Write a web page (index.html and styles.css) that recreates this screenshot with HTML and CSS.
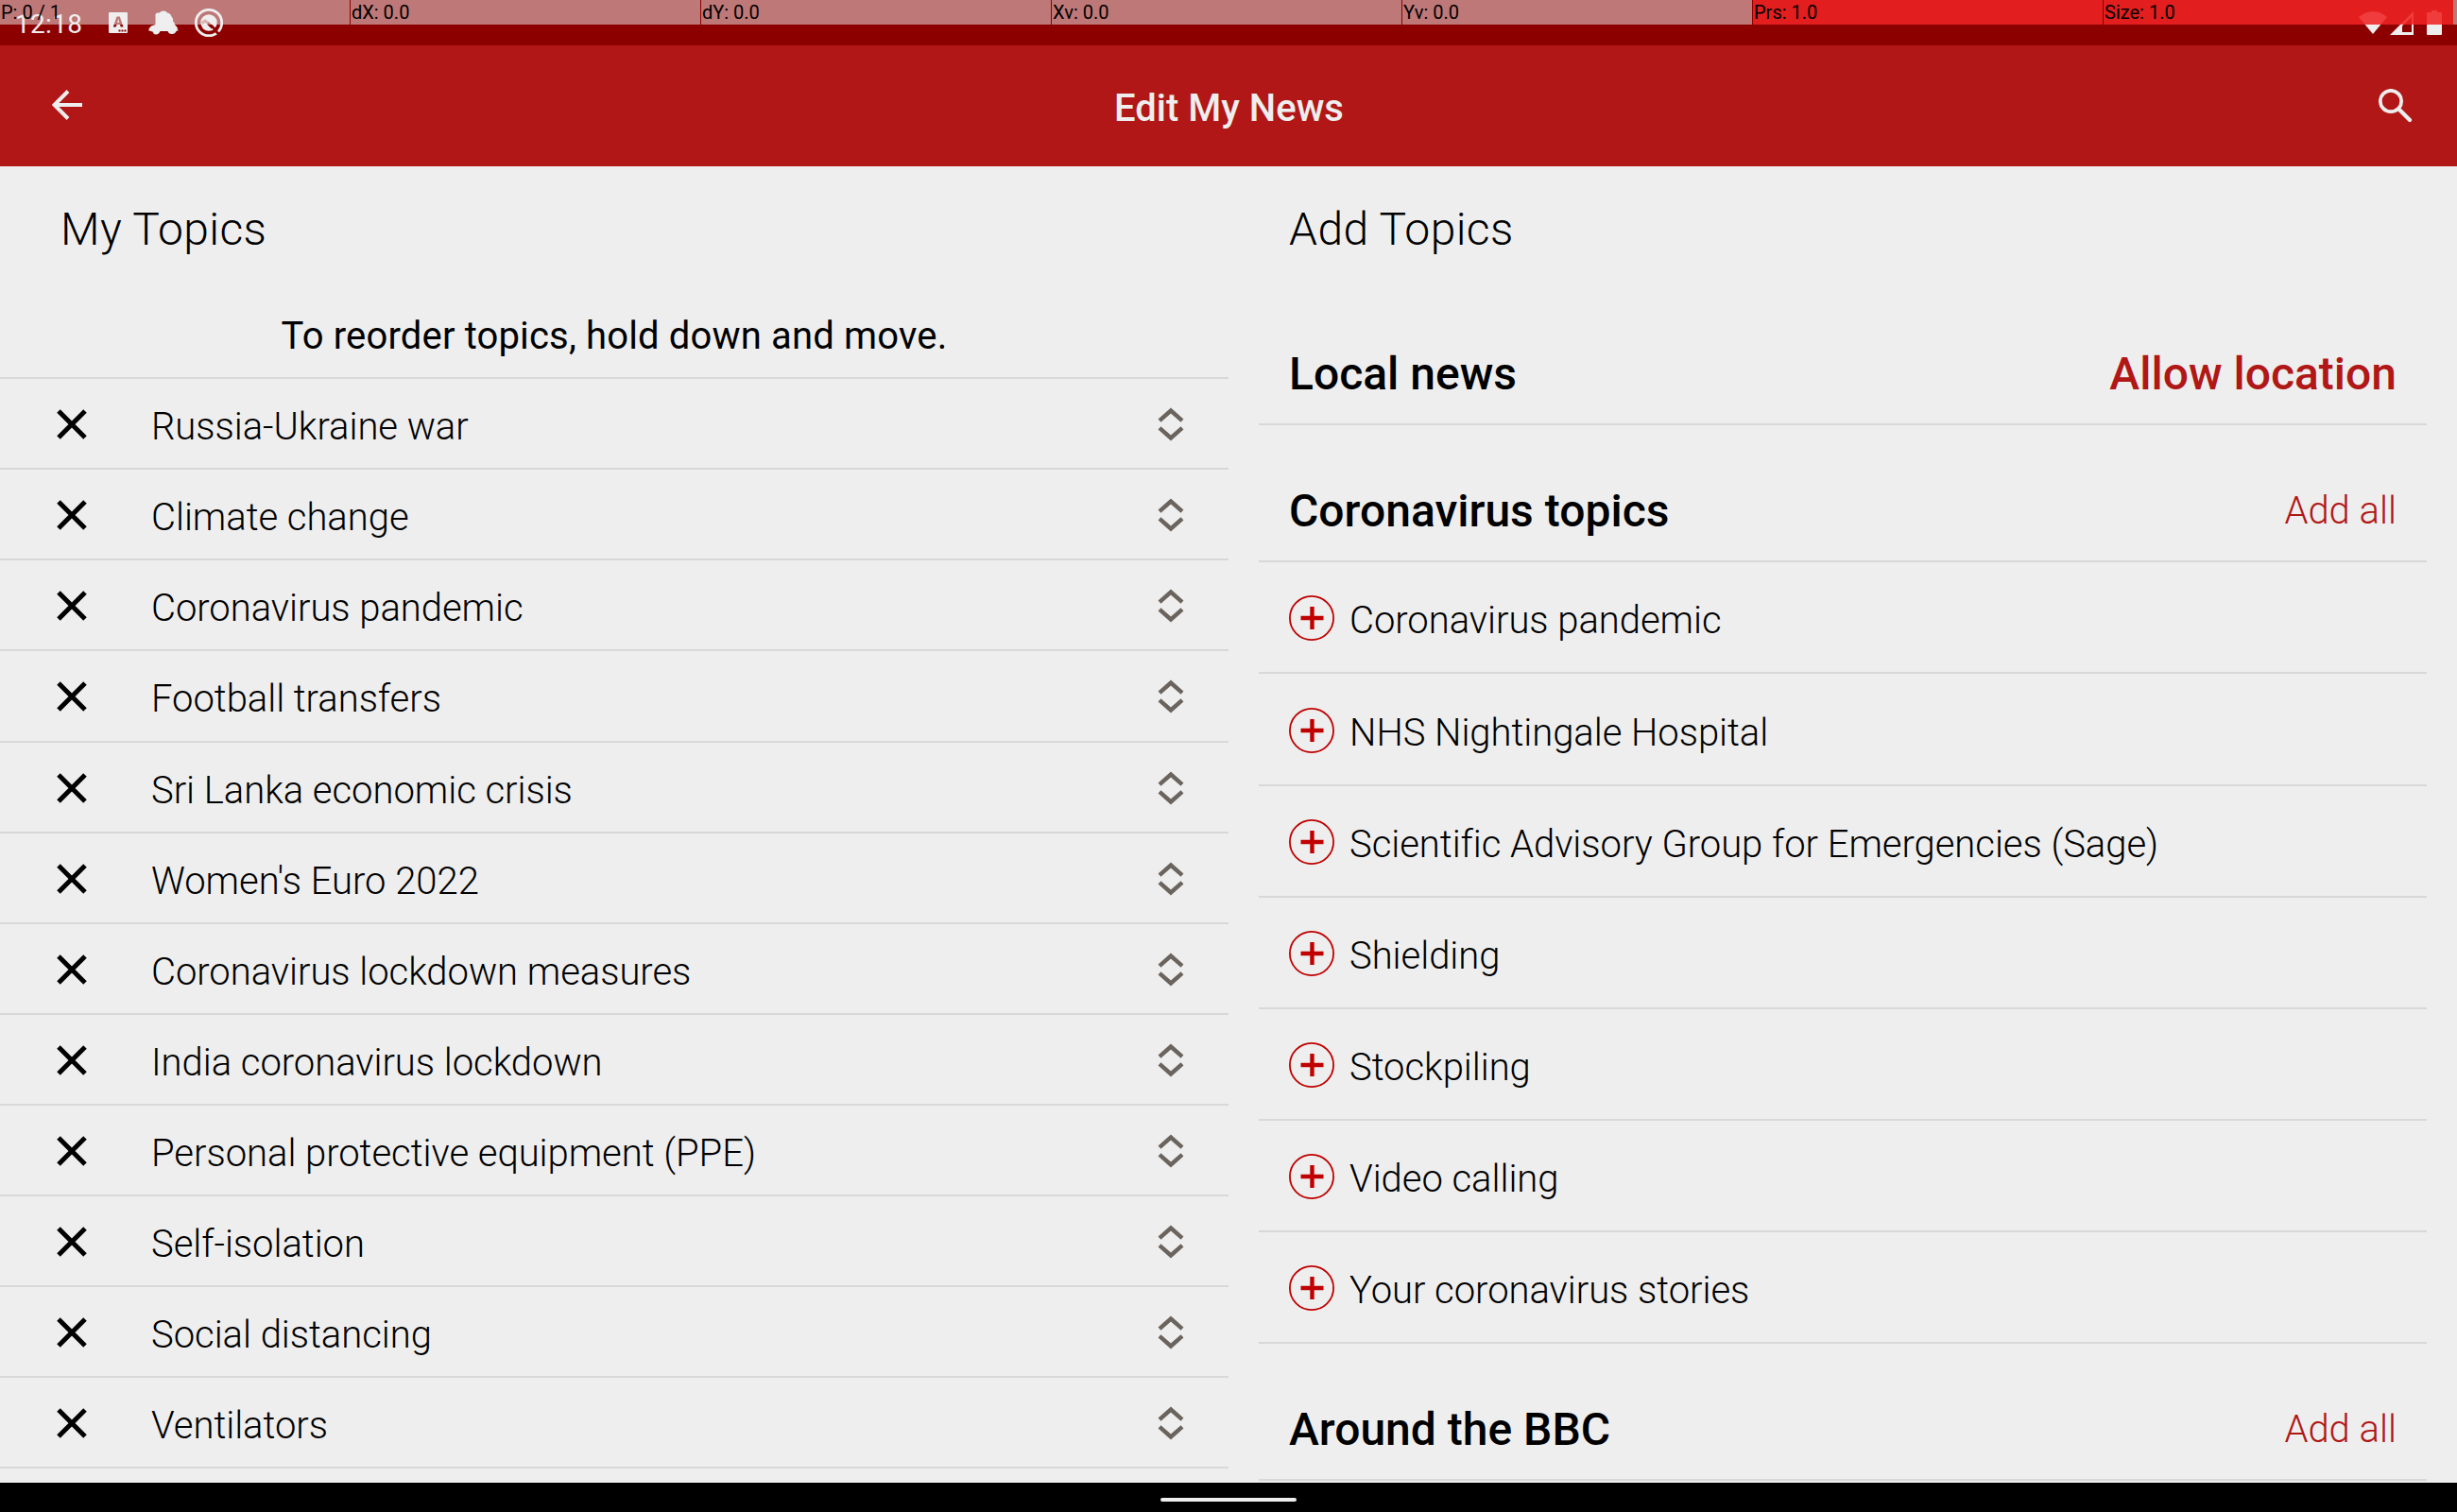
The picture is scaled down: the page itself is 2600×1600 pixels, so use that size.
FILE: index.html
```html
<!DOCTYPE html>
<html lang="en">
<head>
<meta charset="utf-8">
<title>Edit My News</title>
<link rel="stylesheet" href="styles.css">
</head>
<body>
<svg width="0" height="0" class="defs">
  <symbol id="cross" viewBox="0 0 32 32"><path d="M2 2L30 30M30 2L2 30" fill="none" stroke="#000" stroke-width="5"/></symbol>
  <symbol id="sort" viewBox="0 0 28 36"><path d="M2 14.200L14 3.500L26 14.200M2 21.800L14 32.500L26 21.800" fill="none" stroke="#6b645e" stroke-width="4.400"/></symbol>
  <symbol id="plus" viewBox="0 0 48 48"><circle cx="24" cy="24" r="23.100" fill="none" stroke="#c00000" stroke-width="1.800"/><path d="M12.500 24H36.500M24.500 12V36" fill="none" stroke="#c00000" stroke-width="4.400"/></symbol>
</svg>
<div class="screen">
  <div class="status">
    <span class="clock">12:18</span>
    <svg class="status-left" width="124" height="34" viewBox="0 0 124 34">
      <path fill="#eee" fill-rule="evenodd" d="M1 5H19Q20 5 20 6V26Q20 27 19 27H1Q0 27 0 26V6Q0 5 1 5ZM8.500 9.500L4.800 20.500H7.800L8.500 18H12L12.700 20.500H15.500L11.800 9.500ZM9 15.700L10.200 12.300L11.400 15.700ZM10.500 23.500V25.500H12.500V23.500ZM13.500 23.500V25.500H15.500V23.500ZM16.500 23.500V25.500H18.500V23.500Z"/>
      <path fill="#eee" d="M49.500 7Q50 5.500 52 5.500H54Q55 3.500 58 3.500Q61 3.500 62 5.500Q65.500 6 66.500 9.500Q69 12 68 14.500Q70 15.500 70 18L73 21.500L72.500 23L74 24L71.500 25Q70 28.500 66.500 28Q63.500 28 62.500 25H54.500Q53 28.500 50 28.500Q47 28 46.500 25.500L42.500 24.500V22.500L45 19.500L49.500 18Z"/>
      <circle cx="106" cy="16" r="13.700" fill="none" stroke="#eee" stroke-width="2.800"/>
      <circle cx="106" cy="16" r="8.700" fill="#eee"/>
      <path d="M98.500 16.500L102 14L106 17" fill="none" stroke="#bf7878" stroke-width="3"/>
      <path d="M105 16.500L110 21.500M112 23.500L118 29.500" fill="none" stroke="#8c0000" stroke-width="3"/>
      <path d="M108 18.500L114 24.500" fill="none" stroke="#8c0000" stroke-width="2.500"/>
    </svg>
    <svg class="status-right" width="90" height="30" viewBox="0 0 90 30">
      <path fill="#eee" d="M0 7Q15-5 30 7L15 25Z"/>
      <path fill="#eee" fill-rule="evenodd" d="M58 1V26H33ZM56 7L46 16.500V23H56Z"/>
      <path fill="#eee" d="M77 0H83V2H87Q88 2 88 3V25Q88 26 87 26H73Q72 26 72 25V3Q72 2 73 2H77Z"/>
    </svg>
    <div class="pointer">
      <span>P: 0 / 1</span><span>dX: 0.0</span><span>dY: 0.0</span><span>Xv: 0.0</span><span>Yv: 0.0</span><span class="hot">Prs: 1.0</span><span class="hot">Size: 1.0</span><span class="tail"></span>
    </div>
  </div>
  <header class="appbar">
    <svg width="32" height="32" viewBox="0 0 32 32"><path d="M32 16H3M17 1.500L2.500 16L17 30.500" fill="none" stroke="#eee" stroke-width="4"/></svg>
    <h1>Edit My News</h1>
    <svg class="search" width="36" height="36" viewBox="0 0 36 36"><circle cx="13" cy="13" r="11.200" fill="none" stroke="#eee" stroke-width="3.700"/><path d="M22.500 22.500L33 33" fill="none" stroke="#eee" stroke-width="4.200" stroke-linecap="round"/></svg>
  </header>
  <main class="panes">
    <section class="mine">
      <h2>My Topics</h2>
      <p class="hint">To reorder topics, hold down and move.</p>
      <ul>
        <li><svg class="x"><use href="#cross"/></svg><span>Russia-Ukraine war</span><svg class="s"><use href="#sort"/></svg></li>
        <li><svg class="x"><use href="#cross"/></svg><span>Climate change</span><svg class="s"><use href="#sort"/></svg></li>
        <li><svg class="x"><use href="#cross"/></svg><span>Coronavirus pandemic</span><svg class="s"><use href="#sort"/></svg></li>
        <li><svg class="x"><use href="#cross"/></svg><span>Football transfers</span><svg class="s"><use href="#sort"/></svg></li>
        <li><svg class="x"><use href="#cross"/></svg><span>Sri Lanka economic crisis</span><svg class="s"><use href="#sort"/></svg></li>
        <li><svg class="x"><use href="#cross"/></svg><span>Women's Euro 2022</span><svg class="s"><use href="#sort"/></svg></li>
        <li><svg class="x"><use href="#cross"/></svg><span>Coronavirus lockdown measures</span><svg class="s"><use href="#sort"/></svg></li>
        <li><svg class="x"><use href="#cross"/></svg><span>India coronavirus lockdown</span><svg class="s"><use href="#sort"/></svg></li>
        <li><svg class="x"><use href="#cross"/></svg><span>Personal protective equipment (PPE)</span><svg class="s"><use href="#sort"/></svg></li>
        <li><svg class="x"><use href="#cross"/></svg><span>Self-isolation</span><svg class="s"><use href="#sort"/></svg></li>
        <li><svg class="x"><use href="#cross"/></svg><span>Social distancing</span><svg class="s"><use href="#sort"/></svg></li>
        <li><svg class="x"><use href="#cross"/></svg><span>Ventilators</span><svg class="s"><use href="#sort"/></svg></li>
      </ul>
    </section>
    <section class="add">
      <h2>Add Topics</h2>
      <div class="group first"><h3>Local news</h3><a class="strong">Allow location</a></div>
      <div class="group"><h3>Coronavirus topics</h3><a>Add all</a></div>
      <ul>
        <li><svg><use href="#plus"/></svg><span>Coronavirus pandemic</span></li>
        <li><svg><use href="#plus"/></svg><span>NHS Nightingale Hospital</span></li>
        <li><svg><use href="#plus"/></svg><span>Scientific Advisory Group for Emergencies (Sage)</span></li>
        <li><svg><use href="#plus"/></svg><span>Shielding</span></li>
        <li><svg><use href="#plus"/></svg><span>Stockpiling</span></li>
        <li><svg><use href="#plus"/></svg><span>Video calling</span></li>
        <li><svg><use href="#plus"/></svg><span>Your coronavirus stories</span></li>
      </ul>
      <div class="group"><h3>Around the BBC</h3><a>Add all</a></div>
    </section>
  </main>
  <footer class="navbar"><div class="handle"></div></footer>
</div>
</body>
</html>
```
FILE: styles.css
```css
* { box-sizing: border-box; margin: 0; padding: 0; }
body { font-family: Roboto, "Liberation Sans", sans-serif; color: #000; background: #eee; }
ul { list-style: none; }
svg { display: block; flex: none; }
.defs { position: absolute; }
.screen { width: 2600px; height: 1600px; display: flex; flex-direction: column; overflow: hidden; }

.status { position: relative; flex: none; height: 48px; background: #8c0000; display: flex; padding-left: 16px; }
.clock { width: 99px; font-size: 28px; line-height: 51px; letter-spacing: .3px; color: #eee; }
.status-left { margin-top: 8px; }
.status-right { margin: 11px 14px 0 auto; }
.pointer { position: absolute; inset: 0 0 auto 0; height: 26px; display: flex; gap: 1px; }
.pointer span { width: 370px; padding-left: 1px; font-size: 20px; line-height: 26px; background: rgba(240,240,240,.5); }
.pointer .hot { background: linear-gradient(rgba(240,0,0,.75), rgba(240,0,0,.75)), rgba(240,240,240,.5); }
.pointer .tail { flex: 1; width: auto; margin-left: -1px; padding: 0; }

.appbar { flex: none; height: 128px; background: #b01716; display: flex; align-items: center; justify-content: space-between; padding: 0 47px 0 55px; }
.appbar svg { margin-top: -3px; }
.appbar .search { margin-top: -1px; }
.appbar h1 { font-size: 40px; font-weight: 500; line-height: 48px; color: #eee; margin: 6px 3px 0 0; }

.panes { flex: 1; min-height: 0; display: grid; grid-template-columns: 1300px 1300px; overflow: hidden; }
h2 { font-size: 48px; font-weight: 300; line-height: 56px; letter-spacing: .38px; }
.mine h2 { padding: 39px 64px 0; }
.hint { height: 130.2px; padding-top: 61px; font-size: 40px; line-height: 48px; letter-spacing: .16px; text-align: center; border-bottom: 2px solid #d8d8d8; }
.mine li { height: 96.08px; display: flex; align-items: center; border-bottom: 2px solid #d8d8d8; padding: 0 47px 0 60px; font-size: 40px; font-weight: 300; letter-spacing: -.04px; }
.mine span { flex: 1; margin-left: 68px; padding-top: 7px; }
.x { width: 32px; height: 32px; margin-top: 2px; }
.s { width: 28px; height: 36px; margin-top: 2px; }

.add { padding: 39px 32px 0; }
.add h2 { padding-left: 32px; }
.group { height: 145.4px; display: flex; align-items: flex-end; justify-content: space-between; padding: 0 32px 24px; border-bottom: 2px solid #d8d8d8; }
.group.first { height: 179px; }
.group h3 { font-size: 48px; font-weight: 500; line-height: 56px; }
.group a { font-size: 40px; font-weight: 300; line-height: 56px; color: #b01716; }
.group .strong { font-size: 48px; font-weight: 500; }
.add li { height: 118.1px; display: flex; align-items: center; padding-left: 32px; border-bottom: 2px solid #d8d8d8; font-size: 40px; font-weight: 300; letter-spacing: -.04px; }
.add li svg { width: 48px; height: 48px; margin-top: 2px; }
.add li span { margin-left: 16px; padding-top: 7px; }

.navbar { flex: none; height: 31px; background: #000; display: flex; justify-content: center; }
.handle { width: 144px; height: 4px; margin-top: 16px; border-radius: 2px; background: #eee; }
```
